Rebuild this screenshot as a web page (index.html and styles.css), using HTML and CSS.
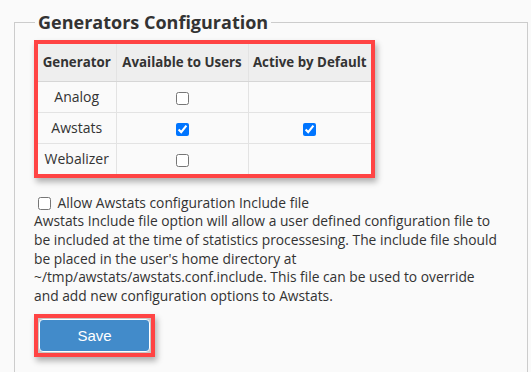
FILE: index.html
```html
<!DOCTYPE html>
<html lang="en">
<head>
    <meta charset="UTF-8">
    <title>Generators Configuration</title>
    <link rel="stylesheet" href="styles.css">
</head>
<body>
    <fieldset class="config">
        <legend>Generators Configuration</legend>

        <div class="highlight table-wrap">
            <table class="gen-table">
                <thead>
                    <tr>
                        <th class="col-name">Generator</th>
                        <th class="col-avail">Available to Users</th>
                        <th class="col-active">Active by Default</th>
                    </tr>
                </thead>
                <tbody>
                    <tr>
                        <td>Analog</td>
                        <td><input type="checkbox"></td>
                        <td></td>
                    </tr>
                    <tr>
                        <td>Awstats</td>
                        <td><input type="checkbox" checked></td>
                        <td><input type="checkbox" checked></td>
                    </tr>
                    <tr>
                        <td>Webalizer</td>
                        <td><input type="checkbox"></td>
                        <td></td>
                    </tr>
                </tbody>
            </table>
        </div>

        <div class="include-opt">
            <label class="include-label"><input type="checkbox"> Allow Awstats configuration Include file</label>
            <p class="help">Awstats Include file option will allow a user defined configuration file to be included at the time of statistics processesing. The include file should be placed in the user's home directory at ~/tmp/awstats/awstats.conf.include. This file can be used to override and add new configuration options to Awstats.</p>
        </div>

        <div class="highlight btn-wrap">
            <button class="btn-save" type="button">Save</button>
        </div>
    </fieldset>
</body>
</html>
```

FILE: styles.css
```css
* {
    box-sizing: border-box;
}

body {
    margin: 0;
    padding: 10px 3px 0 14px;
    background: #fafafa;
    font-family: 'Open Sans', sans-serif;
    font-size: 14px;
    color: #333;
    overflow: hidden;
}

.config {
    margin: 0;
    border: 1px solid #ccc;
    border-bottom: none;
    padding: 6px 10px 0 19px;
    min-height: 362px;
}

.config legend {
    font-size: 18px;
    font-weight: 700;
    line-height: 24px;
    padding: 0 3px;
    margin-left: 1px;
    color: #333;
}

.highlight {
    display: inline-block;
    border: 4px solid #ff4444;
    box-shadow: 2px 4px 6px rgba(0, 0, 0, 0.3);
}

.gen-table {
    border-collapse: collapse;
    background: #fafafa;
}

.gen-table th,
.gen-table td {
    border: 1px solid #e3e3e3;
    text-align: center;
    padding: 0 4px;
    white-space: nowrap;
}

.gen-table tr > :first-child {
    border-left: none;
}

.gen-table tr > :last-child {
    border-right: none;
}

.gen-table thead th {
    border-top: none;
    background: #eeeeee;
    border-bottom: 1px solid #d6d6d6;
    height: 37px;
    font-size: 13.3px;
    font-weight: 700;
}

.gen-table tbody tr:last-child td {
    border-bottom: none;
}

.gen-table td {
    height: 31px;
}

.col-name { width: 78px; }
.col-avail { width: 132px; }
.col-active { width: 123px; }

.gen-table input {
    margin: 0;
    vertical-align: middle;
    width: 13px;
    height: 13px;
}

.include-opt {
    margin-top: 11px;
    width: 464px;
    font-size: 13.8px;
}

.include-label {
    display: block;
    line-height: 19px;
}

.include-label input {
    margin: 0 3px 0 4px;
    vertical-align: -2px;
}

.help {
    margin: 0;
    line-height: 18.8px;
}

.btn-wrap {
    margin-top: 8px;
    padding: 1px;
    background: #c8c8c8;
}

.btn-save {
    display: block;
    width: 111px;
    height: 33px;
    border: 1px solid #fff;
    border-radius: 4px;
    background: #428bca;
    color: #fff;
    font-family: 'Liberation Sans', Arial, sans-serif;
    font-size: 15px;
}
```
